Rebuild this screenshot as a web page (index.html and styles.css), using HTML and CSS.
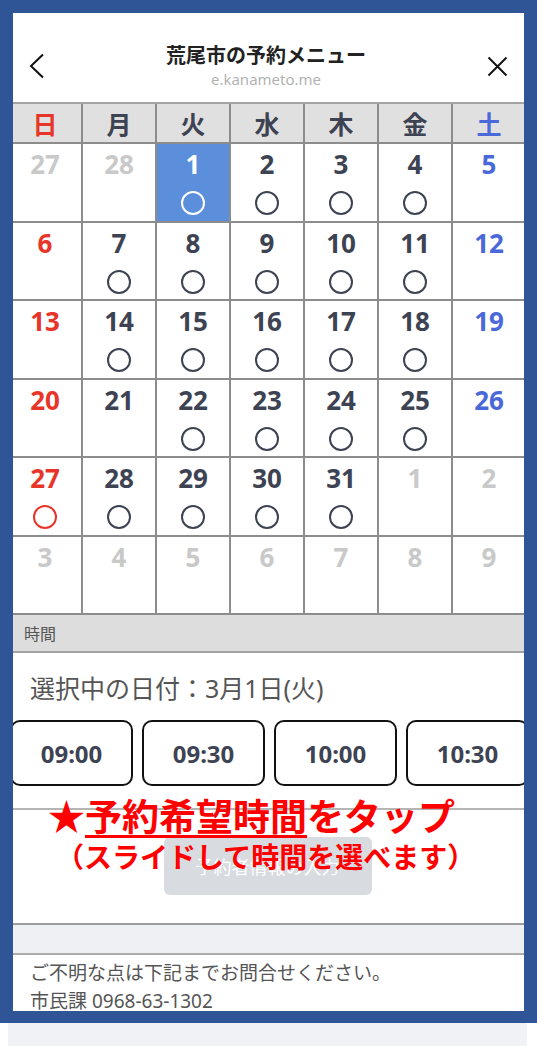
FILE: index.html
```html
<!DOCTYPE html>
<html lang="ja">
<head>
    <meta charset="UTF-8">
    <meta name="viewport" content="width=device-width, initial-scale=1.0">
    <title>荒尾市の予約メニュー</title>
    <link rel="stylesheet" href="styles.css">
</head>
<body>

    <div class="shot">
        <div class="screen">

            <header class="top-bar">
                <svg class="icon-back" width="16" height="26" viewBox="0 0 16 26">
                    <polyline points="14,1.5 2,13 14,24.5" fill="none" stroke="#111" stroke-width="2"/>
                </svg>
                <div class="title-box">
                    <h1>荒尾市の予約メニュー</h1>
                    <p>e.kanameto.me</p>
                </div>
                <svg class="icon-close" width="21" height="21" viewBox="0 0 21 21">
                    <line x1="1.5" y1="1.5" x2="19.5" y2="19.5" stroke="#111" stroke-width="2"/>
                    <line x1="19.5" y1="1.5" x2="1.5" y2="19.5" stroke="#111" stroke-width="2"/>
                </svg>
            </header>

            <div class="calendar">
                <div class="week sun">日</div>
                <div class="week">月</div>
                <div class="week">火</div>
                <div class="week">水</div>
                <div class="week">木</div>
                <div class="week">金</div>
                <div class="week sat">土</div>

                <div class="day other"><b>27</b></div>
                <div class="day other"><b>28</b></div>
                <div class="day selected"><b>1</b><span class="mark"></span></div>
                <div class="day"><b>2</b><span class="mark"></span></div>
                <div class="day"><b>3</b><span class="mark"></span></div>
                <div class="day"><b>4</b><span class="mark"></span></div>
                <div class="day sat"><b>5</b></div>

                <div class="day sun"><b>6</b></div>
                <div class="day"><b>7</b><span class="mark"></span></div>
                <div class="day"><b>8</b><span class="mark"></span></div>
                <div class="day"><b>9</b><span class="mark"></span></div>
                <div class="day"><b>10</b><span class="mark"></span></div>
                <div class="day"><b>11</b><span class="mark"></span></div>
                <div class="day sat"><b>12</b></div>

                <div class="day sun"><b>13</b></div>
                <div class="day"><b>14</b><span class="mark"></span></div>
                <div class="day"><b>15</b><span class="mark"></span></div>
                <div class="day"><b>16</b><span class="mark"></span></div>
                <div class="day"><b>17</b><span class="mark"></span></div>
                <div class="day"><b>18</b><span class="mark"></span></div>
                <div class="day sat"><b>19</b></div>

                <div class="day sun"><b>20</b></div>
                <div class="day"><b>21</b></div>
                <div class="day"><b>22</b><span class="mark"></span></div>
                <div class="day"><b>23</b><span class="mark"></span></div>
                <div class="day"><b>24</b><span class="mark"></span></div>
                <div class="day"><b>25</b><span class="mark"></span></div>
                <div class="day sat"><b>26</b></div>

                <div class="day sun"><b>27</b><span class="mark"></span></div>
                <div class="day"><b>28</b><span class="mark"></span></div>
                <div class="day"><b>29</b><span class="mark"></span></div>
                <div class="day"><b>30</b><span class="mark"></span></div>
                <div class="day"><b>31</b><span class="mark"></span></div>
                <div class="day other"><b>1</b></div>
                <div class="day other"><b>2</b></div>

                <div class="day other"><b>3</b></div>
                <div class="day other"><b>4</b></div>
                <div class="day other"><b>5</b></div>
                <div class="day other"><b>6</b></div>
                <div class="day other"><b>7</b></div>
                <div class="day other"><b>8</b></div>
                <div class="day other"><b>9</b></div>
            </div>

            <div class="section-head">時間</div>

            <div class="time-area">
                <p class="selected-date">選択中の日付：3月1日(火)</p>
                <div class="slots">
                    <button class="slot">09:00</button>
                    <button class="slot">09:30</button>
                    <button class="slot">10:00</button>
                    <button class="slot">10:30</button>
                </div>
            </div>

            <div class="submit-area">
                <button class="btn-submit" disabled>予約者情報の入力</button>
            </div>

            <div class="spacer"></div>

            <div class="footer">
                <p>ご不明な点は下記までお問合せください。</p>
                <p>市民課 0968-63-1302</p>
            </div>

            <div class="page-rest"></div>
        </div>

        <!-- 枠と注釈は画面の上に重ねる -->
        <div class="frame"></div>
        <div class="note">
            <p class="note-main">★<u>予約希望時間</u>をタップ</p>
            <p class="note-sub">（スライドして時間を選べます）</p>
        </div>
    </div>

</body>
</html>
```

FILE: styles.css
```css
body {
    margin: 0;
    background-color: #ffffff;
    font-family: "Noto Sans", "Noto Sans CJK JP", sans-serif;
    color: #3d4352;
}

p {
    margin: 0;
}

.shot {
    position: relative;
    width: 537px;
    height: 1046px;
    overflow: hidden;
}

.screen {
    margin-left: 8px;
    width: 519px;
}

/* ヘッダー */
.top-bar {
    height: 104px;
    box-sizing: border-box;
    padding: 30px 19px 0 21px;
    display: flex;
    align-items: center;
    border-bottom: 2px solid #a3a3a3;
}

.title-box {
    flex: 1;
    text-align: center;
}

.title-box h1 {
    margin: 0;
    font-size: 20px;
    line-height: 26px;
    font-weight: 700;
    color: #222222;
}

.title-box p {
    font-size: 15px;
    line-height: 20px;
    color: #b3b3b3;
}

/* カレンダー */
.calendar {
    margin: 0 1px;
    display: grid;
    grid-template-columns: repeat(7, 72px);
    grid-auto-rows: 76.5px;
    grid-template-rows: 38px;
    gap: 2px;
    padding-bottom: 2px;
    background-color: #8c8c8c;
}

.week {
    background-color: #e0e0e0;
    display: flex;
    align-items: center;
    justify-content: center;
    font-size: 25px;
    font-weight: 700;
    font-family: "Noto Sans CJK JP", sans-serif;
}

.day {
    background-color: #ffffff;
    display: flex;
    flex-direction: column;
    align-items: center;
    padding-top: 5px;
    box-sizing: border-box;
}

.day b {
    font-size: 26px;
    line-height: 30px;
}

.mark {
    margin-top: 12px;
    width: 24px;
    height: 24px;
    box-sizing: border-box;
    border: 2.5px solid #3d4352;
    border-radius: 50%;
}

.sun {
    color: #e8352a;
}

.sun .mark {
    border-color: #e8352a;
}

.sat {
    color: #4a68d9;
}

.other {
    color: #c9c9c9;
}

.selected {
    background-color: #5b8fdb;
    color: #ffffff;
}

.selected .mark {
    border-color: #ffffff;
}

/* 時間 */
.section-head {
    height: 36px;
    padding-left: 16px;
    display: flex;
    align-items: center;
    background-color: #dddddd;
    border-bottom: 2px solid #a3a3a3;
    font-size: 16px;
    color: #555555;
}

.time-area {
    padding: 18px 0 22px;
    border-bottom: 2px solid #b5b5b5;
}

.selected-date {
    padding-left: 22px;
    font-size: 25px;
    line-height: 34px;
    color: #555555;
}

.slots {
    margin-top: 15px;
    padding-left: 2px;
    display: flex;
    gap: 9px;
    overflow: hidden;
}

.slot {
    flex-shrink: 0;
    width: 123px;
    height: 66px;
    background-color: #ffffff;
    border: 2.5px solid #111111;
    border-radius: 10px;
    font-family: "Noto Sans", sans-serif;
    font-size: 24px;
    font-weight: 700;
    color: #3d4352;
}

.submit-area {
    padding: 27px 0 28px;
    display: flex;
    justify-content: center;
    border-bottom: 2px solid #9c9c9c;
}

.btn-submit {
    width: 208px;
    height: 58px;
    border: none;
    border-radius: 6px;
    background-color: #d8dbe0;
    color: #ffffff;
    font-family: "Noto Sans CJK JP", sans-serif;
    font-size: 18px;
}

.spacer {
    height: 28px;
    background-color: #eff0f4;
    border-bottom: 2px solid #acacac;
}

.footer {
    height: 68px;
    padding: 4px 22px 0;
    box-sizing: border-box;
    border-bottom: 2px solid #9c9c9c;
    border-radius: 0 0 6px 6px;
    font-size: 19px;
    line-height: 28px;
    color: #555555;
}

.page-rest {
    height: 40px;
    background-color: #f1f2f6;
}

/* 青い枠 */
.frame {
    position: absolute;
    top: 0;
    left: 0;
    width: 537px;
    height: 1023px;
    box-sizing: border-box;
    border: 13px solid #2f5596;
    border-bottom-width: 12px;
}

/* 赤い注釈 */
.note {
    position: absolute;
    top: 793px;
    left: 48px;
    color: #ff0000;
    font-family: "Noto Sans CJK JP", sans-serif;
    font-weight: 700;
}

.note-main {
    font-size: 37px;
    line-height: 44px;
}

.note-main u {
    text-decoration-thickness: 3px;
    text-underline-offset: 4px;
}

.note-sub {
    margin-top: 3px;
    margin-left: 8px;
    font-size: 28px;
    line-height: 32px;
}
```
